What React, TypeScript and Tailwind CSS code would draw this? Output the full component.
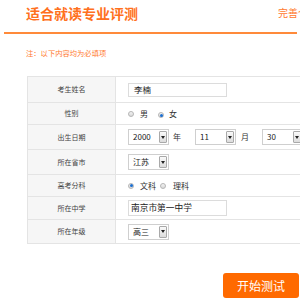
import React from "react";

const font = { fontFamily: '"Noto Sans CJK SC", "Noto Sans", sans-serif' };

function Radio({ checked }: { checked?: boolean }) {
  return (
    <span className="inline-flex h-[6px] w-[6px] shrink-0 items-center justify-center rounded-full border border-[#b5b5b5] bg-gradient-to-b from-[#f4f4f4] to-[#d8d8d8]">
      {checked && <span className="h-[3px] w-[3px] rounded-full bg-[#1b6fd1]" />}
    </span>
  );
}

function Select({ value, w = "w-[41px]" }: { value: string; w?: string }) {
  return (
    <div className={`flex h-[16px] ${w} shrink-0 items-center justify-between border border-[#cfcfcf] bg-white pl-[4px] pr-[1px]`}>
      <span className="text-[8px] leading-none text-[#222]">{value}</span>
      <span className="flex h-[12px] w-[8px] items-center justify-center rounded-[1px] border border-[#a9a9a9] bg-gradient-to-b from-[#fafafa] to-[#dcdcdc]">
        <svg width="4" height="3" viewBox="0 0 4 3">
          <path d="M0 0 L4 0 L2 3 Z" fill="#222" />
        </svg>
      </span>
    </div>
  );
}

function Row({ label, h, children }: { label: string; h: string; children: React.ReactNode }) {
  return (
    <div className={`flex ${h} border-b border-[#e4e4e4] last:border-b-0`}>
      <div className="flex w-[88px] shrink-0 items-center justify-center border-r border-[#e4e4e4] bg-[#f6f6f6] text-[7px] text-[#444]">
        {label}
      </div>
      <div className="flex flex-1 items-center pl-[12px] text-[8px] text-[#333]">{children}</div>
    </div>
  );
}

export default function App() {
  return (
    <div className="relative h-[300px] w-[300px] overflow-hidden bg-white" style={font}>
      <div className="flex h-[32px] items-start">
        <div className="mt-[6px] pl-[26px] text-[14px] font-bold leading-[15px] text-[#ff7020]">适合就读专业评测</div>
        <div className="ml-auto mt-[7px] w-[22px] overflow-hidden whitespace-nowrap text-[10px] leading-[11px] text-[#ff7a30]">
          完善个人信息
        </div>
      </div>
      <div className="ml-[4px] h-[2px] w-[293px] bg-[#ff8a3a]" />
      <div className="mt-[15px] pl-[26px] text-[7.3px] leading-[9px] text-[#ff7a30]">注：以下内容均为必填项</div>
      <div className="ml-[27px] mt-[18px] w-[300px] border border-[#e4e4e4]">
        <Row label="考生姓名" h="h-[26px]">
          <div className="flex h-[14px] w-[99px] items-center border border-[#dcdcdc] pl-[5px] text-[8.5px] text-[#222]">李楠</div>
        </Row>
        <Row label="性别" h="h-[22px]">
          <Radio />
          <span className="ml-[6px]">男</span>
          <span className="ml-[10px]"><Radio checked /></span>
          <span className="ml-[5px]">女</span>
        </Row>
        <Row label="出生日期" h="h-[25px]">
          <Select value="2000" />
          <span className="ml-[4px]">年</span>
          <span className="ml-[14px]"><Select value="11" /></span>
          <span className="ml-[5px]">月</span>
          <span className="ml-[13px]"><Select value="30" /></span>
        </Row>
        <Row label="所在省市" h="h-[25px]">
          <Select value="江苏" />
        </Row>
        <Row label="高考分科" h="h-[22px]">
          <Radio checked />
          <span className="ml-[6px]">文科</span>
          <span className="ml-[4px]"><Radio /></span>
          <span className="ml-[7px]">理科</span>
        </Row>
        <Row label="所在中学" h="h-[23px]">
          <div className="flex h-[16px] w-[99px] items-center border border-[#dcdcdc] pl-[2px] text-[8.7px] text-[#222]">南京市第一中学</div>
        </Row>
        <Row label="所在年级" h="h-[23px]">
          <Select value="高三" />
        </Row>
      </div>
      <div className="mt-[29px] flex justify-end pr-[1px]">
        <div className="flex h-[25px] w-[76px] items-center justify-center rounded-[3px] bg-[#ff6a00] text-[12px] text-white">开始测试</div>
      </div>
    </div>
  );
}
